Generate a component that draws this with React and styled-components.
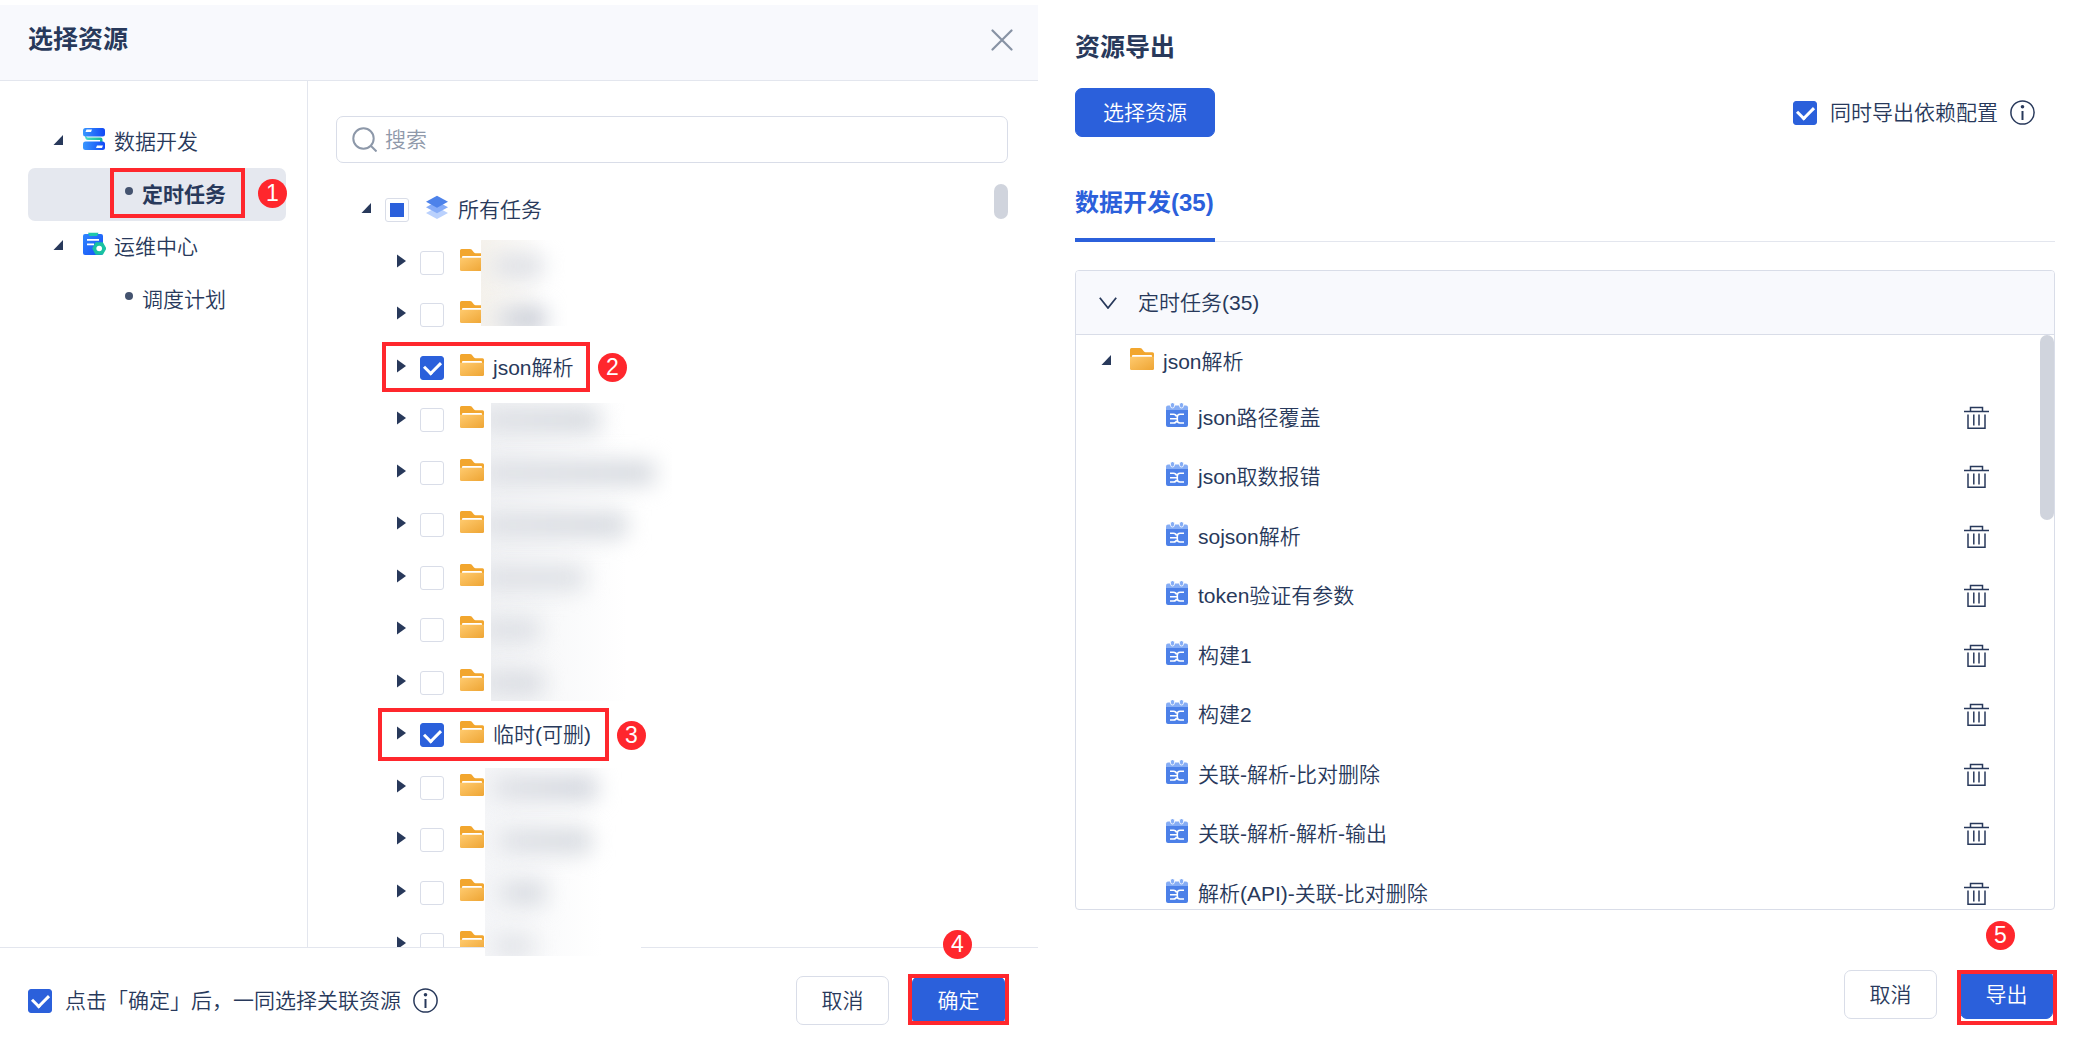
import { useEffect, useRef } from 'react';
import styled, { createGlobalStyle, ThemeProvider } from 'styled-components';

const theme = {
  colors: {
    primary: '#2b60db',
    text: '#28395b',
    textSecondary: '#8f99aa',
    header: '#f8f9fd',
    border: '#d9dde8',
    divider: '#e3e6ee',
    active: '#e5e8ef',
    thumb: '#d0d4dd',
    mark: '#ff272d',
  },
};

const GlobalStyle = createGlobalStyle`
  * {
    box-sizing: border-box;
  }

  body {
    margin: 0;
    background: #fff;
  }

  body, button, input {
    font-family: "Liberation Sans", "Noto Sans CJK SC", sans-serif;
    font-size: 21px;
    font-weight: 350;
    line-height: 32px;
    color: ${theme.colors.text};
  }

  ul {
    list-style: none;
    margin: 0;
    padding: 0;
  }
`;

const Page = styled.main`
  display: grid;
  grid-template-columns: minmax(0, 1038fr) minmax(0, 1047fr);
  height: 100vh;
`;

/* ---------- shared parts ---------- */

const IconButton = styled.button`
  display: flex;
  flex: none;
  padding: 0;
  border: 0;
  background: none;
  cursor: pointer;
`;

const Button = styled.button`
  position: relative;
  min-width: 93px;
  height: 49px;
  padding: 0 ${props => (props.$wide ? 27 : 24)}px;
  border: 1px solid ${props => (props.$primary ? props.theme.colors.primary : props.theme.colors.border)};
  border-radius: 7px;
  background: ${props => (props.$primary ? props.theme.colors.primary : '#fff')};
  color: ${props => (props.$primary ? '#fff' : props.theme.colors.text)};
  cursor: pointer;
`;

const CheckInput = styled.input`
  appearance: none;
  flex: none;
  display: grid;
  place-items: center;
  width: 24px;
  height: 24px;
  margin: 0;
  border: 1px solid ${props => props.theme.colors.border};
  border-radius: 3px;
  background: #fff;

  &:checked {
    border-color: ${props => props.theme.colors.primary};
    background: ${props => props.theme.colors.primary};
  }

  &:checked::after {
    content: '';
    width: 8px;
    height: 13px;
    margin-bottom: 3px;
    border: solid #fff;
    border-width: 0 3px 3px 0;
    transform: rotate(45deg);
  }

  &:indeterminate::after {
    content: '';
    width: 14px;
    height: 14px;
    background: ${props => props.theme.colors.primary};
  }
`;

const Thumb = styled.div`
  position: absolute;
  top: 0;
  right: 0;
  width: 14px;
  height: ${props => props.$length}px;
  border-radius: 7px;
  background: ${props => props.theme.colors.thumb};
`;

const Frame = styled.span`
  position: absolute;
  top: ${props => props.$top}px;
  left: ${props => props.$left}px;
  width: ${props => props.$width}px;
  height: ${props => props.$height}px;
  border: 4px solid ${props => props.theme.colors.mark};
  pointer-events: none;
`;

const Badge = styled.span`
  position: absolute;
  top: ${props => props.$top}px;
  left: ${props => props.$left}px;
  width: 29px;
  height: 29px;
  border-radius: 50%;
  background: ${props => props.theme.colors.mark};
  color: #fff;
  font-size: 23px;
  font-weight: 400;
  line-height: 29px;
  text-align: center;
  pointer-events: none;
`;

const CheckLabel = styled.label`
  display: flex;
  align-items: center;
  gap: 13px;
`;

const CheckField = styled.div`
  display: flex;
  align-items: center;
  gap: 12px;
`;

const RowIcon = styled.svg`
  flex: none;
  display: block;
  width: 24px;
  height: 24px;
  margin-bottom: 6px;
`;

const CaretButton = styled(IconButton)`
  margin-bottom: 4px;
`;

/* ---------- icons ---------- */

function Caret({ open }) {
  return (
    <CaretButton type="button" aria-label={open ? '收起' : '展开'}>
      <svg width="10" height="14" viewBox="0 0 10 14">
        <path d={open ? 'M10 2v10H.5z' : 'M1 .5l9 6.5-9 6.5z'} fill="#28395b" />
      </svg>
    </CaretButton>
  );
}

function FolderIcon() {
  return (
    <RowIcon viewBox="0 0 24 24">
      <defs>
        <linearGradient id="folder" x1="0" y1="0" x2="1" y2="1">
          <stop offset="0" stopColor="#ffca6e" />
          <stop offset="1" stopColor="#eea534" />
        </linearGradient>
      </defs>
      <path d="M0 2.500Q0 1 1.500 1H10Q11 1 11.600 1.600L14 4.500Q14.600 5.200 15.500 5.200H22.500Q24 5.200 24 6.700V15H0z" fill="#f2a62e" />
      <path d="M2 10V8.800Q2 8 3 8H21Q22 8 22 8.800V11H2z" fill="#fff" />
      <path d="M0 9.700H24V21.500Q24 23 22.500 23H1.500Q0 23 0 21.500z" fill="url(#folder)" />
    </RowIcon>
  );
}

function LayersIcon() {
  return (
    <RowIcon viewBox="0 0 24 24">
      <path d="M1 18l11-6 11 6-11 6z" fill="#bad1fd" />
      <path d="M1 12.300l11-6 11 6-11 6z" fill="#86acf8" />
      <path d="M1 6.800L12 .8l11 6-11 6z" fill="#4d82ea" />
    </RowIcon>
  );
}

function TaskIcon() {
  return (
    <RowIcon viewBox="0 0 24 24">
      <path d="M1 4.500Q1 2.500 3 2.500H21Q23 2.500 23 4.500V9H1z" fill="#86adf5" />
      <path d="M1 7H23V22Q23 24 21 24H3Q1 24 1 22z" fill="#4c80e8" />
      <rect x="5.500" y="-.5" width="4" height="5.500" rx="2" fill="#86adf5" stroke="#fff" strokeWidth="0.800" />
      <rect x="14.500" y="-.5" width="4" height="5.500" rx="2" fill="#86adf5" stroke="#fff" strokeWidth="0.800" />
      <path d="M5 11.300H8.500Q11 11.300 11.500 13.500M5 15.700H11.500M5 20H8.500Q11 20 11.500 18M19 11.300H15Q12.300 11.300 12.300 14V17.300Q12.300 20 15 20H19" fill="none" stroke="#fff" strokeWidth="1.600" />
    </RowIcon>
  );
}

function DataIcon() {
  return (
    <RowIcon viewBox="0 0 24 24">
      <defs>
        <linearGradient id="bar" x1="0" x2="1" y1="0" y2="0">
          <stop offset="0" stopColor="#3997ff" />
          <stop offset="1" stopColor="#1148f5" />
        </linearGradient>
        <linearGradient id="link" x1="0" x2="1" y1="0" y2="0">
          <stop offset="0" stopColor="#4ddcc8" />
          <stop offset="1" stopColor="#13b795" />
        </linearGradient>
      </defs>
      <path d="M3 8.500l2.500 2H18.500q2 0 2 2V15.500h-2.500V13H6q-3 0-3-4.500z" fill="url(#link)" />
      <rect x="1" y="1" width="22" height="8.500" rx="2.500" fill="url(#bar)" />
      <rect x="1" y="14.500" width="22" height="8.500" rx="2.500" fill="url(#bar)" />
      <path d="M4.500 2.500H10L9 5H3.500zM15 18.500h6L20 21h-6z" fill="#fff" />
    </RowIcon>
  );
}

function CenterIcon() {
  return (
    <RowIcon viewBox="0 0 24 24">
      <defs>
        <linearGradient id="sheet" x1="0" x2="1" y1="0" y2="1">
          <stop offset="0" stopColor="#2f86ff" />
          <stop offset="1" stopColor="#164ef5" />
        </linearGradient>
      </defs>
      <rect x="1" y="2" width="20" height="21" rx="2" fill="url(#sheet)" />
      <path d="M6 .8H16.500L15 4H7.500z" fill="#1fc7ac" />
      <path d="M5 7.800H17M5 12.300H12" stroke="#fff" strokeWidth="1.800" />
      <path d="M14 11h6.500l3 5.500-3 5.500H14l-3-5.500z" fill="#19c2a2" stroke="#19c2a2" strokeWidth="1.500" strokeLinejoin="round" />
      <circle cx="17.200" cy="16.500" r="2.800" fill="#fff" />
    </RowIcon>
  );
}

function TrashIcon() {
  return (
    <svg width="25" height="24" viewBox="0 0 25 24" fill="none" stroke="#28395b" strokeWidth="1.500">
      <path d="M0 5.500H25M6.500 5V1.500H18.500V5M4 8.500V22.300H21V8.500M9.800 8.500V19.500M15 8.500V19.500" />
    </svg>
  );
}

function InfoIcon() {
  return (
    <svg width="25" height="25" viewBox="0 0 25 25">
      <circle cx="12.500" cy="12.500" r="11.600" fill="none" stroke="#28395b" strokeWidth="1.500" />
      <circle cx="12.500" cy="6.800" r="1.800" fill="#28395b" />
      <path d="M12.500 11V20" stroke="#28395b" strokeWidth="2" />
    </svg>
  );
}

/* ---------- resource dialog ---------- */

const Dialog = styled.section`
  display: flex;
  flex-direction: column;
  min-height: 0;
  padding-top: 5px;
`;

const DialogHeader = styled.header`
  display: flex;
  flex: none;
  justify-content: space-between;
  height: 76px;
  padding: 18px 25px 0 28px;
  border-bottom: 1px solid ${props => props.theme.colors.divider};
  background: ${props => props.theme.colors.header};
`;

const Title = styled.h2`
  margin: 0;
  font-size: 25px;
  font-weight: 700;
  line-height: 32px;
`;

const DialogBody = styled.div`
  position: relative;
  display: flex;
  flex: 1;
  min-height: 0;
`;

const Sidebar = styled.nav`
  flex: none;
  width: 308px;
  padding: 35px 21px 0 28px;
  border-right: 1px solid ${props => props.theme.colors.divider};
`;

const NavList = styled.ul`
  display: grid;
  grid-auto-rows: 52px 53px;
`;

const NavRow = styled.li`
  position: relative;
  display: flex;
  align-items: center;
  padding-left: ${props => (props.$child ? 97 : 25)}px;
  border-radius: 7px;
  background: ${props => (props.$active ? props.theme.colors.active : 'none')};

  ${CaretButton} {
    margin-right: 19px;
  }

  ${RowIcon} {
    margin-right: 8px;
  }
`;

const NavLink = styled.a`
  display: flex;
  align-items: center;
  gap: 9px;
  color: inherit;
  font-weight: ${props => (props.$active ? 700 : 350)};
  text-decoration: none;
`;

const Bullet = styled.span`
  width: 8px;
  height: 8px;
  margin-bottom: 7px;
  border-radius: 50%;
  background: #44536f;
`;

const Picker = styled.div`
  display: flex;
  flex: 1;
  flex-direction: column;
  gap: 21px;
  min-width: 0;
  padding: 35px 30px 0 28px;
`;

const SearchBox = styled.label`
  display: flex;
  flex: none;
  align-items: center;
  gap: 8px;
  height: 47px;
  padding: 0 15px;
  border: 1px solid ${props => props.theme.colors.border};
  border-radius: 7px;
`;

const SearchInput = styled.input`
  flex: 1;
  min-width: 0;
  padding: 0;
  border: 0;
  outline: 0;
  background: none;

  &::placeholder {
    color: ${props => props.theme.colors.textSecondary};
    opacity: 1;
  }
`;

const TreeArea = styled.div`
  position: relative;
  flex: 1;
  min-height: 0;
  overflow: hidden;
`;

const TreeList = styled.ul`
  display: grid;
  grid-auto-rows: 52px 53px;
`;

const TreeRow = styled.li`
  position: relative;
  display: flex;
  align-items: center;
  padding-left: ${props => (props.$root ? 25 : 60)}px;

  ${CaretButton} {
    margin-right: 14px;
  }
`;

const TreeLabel = styled.label`
  display: flex;
  align-items: center;
  gap: 9px;
  margin-left: 16px;
`;

const Mosaic = styled.div`
  position: absolute;
  z-index: 1;
  top: ${props => props.$top}px;
  left: ${props => props.$left}px;
  display: grid;
  grid-template-rows: ${props => props.$first}px;
  grid-auto-rows: 53px 52px;
  align-items: end;
  width: ${props => props.$width}px;
  height: ${props => props.$height}px;
  overflow: hidden;
  background: linear-gradient(to right, ${props => props.$tint}, #fff 75%), #fff;
`;

const Smudge = styled.span`
  height: 24px;
  margin-left: ${props => props.$indent || -12}px;
  width: ${props => props.$width}px;
  border-radius: 6px;
  background: linear-gradient(to right, #dfe1e6, ${props => props.$tone || '#d3d7dd'});
  filter: blur(11px);
`;

const Footer = styled.footer`
  position: relative;
  display: flex;
  flex: none;
  align-items: center;
  justify-content: space-between;
  height: 90px;
  padding: 16px 33px 0 28px;
  border-top: 1px solid ${props => props.theme.colors.divider};
`;

const Actions = styled.div`
  display: flex;
  gap: 23px;
`;

/* ---------- export pane ---------- */

const Pane = styled.section`
  display: flex;
  flex-direction: column;
  min-height: 0;
  padding: 31px 30px 18px 37px;
`;

const Toolbar = styled.div`
  display: flex;
  flex: none;
  align-items: center;
  justify-content: space-between;
  margin: 25px 0 50px;
  padding-right: 20px;
`;

const Tabs = styled.div`
  display: flex;
  flex: none;
  border-bottom: 1px solid ${props => props.theme.colors.divider};
`;

const Tab = styled.button`
  margin-bottom: -1px;
  padding: 0 1px 19px 0;
  border: 0;
  border-bottom: 4px solid ${props => props.theme.colors.primary};
  background: none;
  color: ${props => props.theme.colors.primary};
  font-size: 24px;
  font-weight: 700;
`;

const Panel = styled.div`
  display: flex;
  flex: 1;
  flex-direction: column;
  min-height: 0;
  margin: 28px 0 60px;
  border: 1px solid ${props => props.theme.colors.border};
  border-radius: 4px;
  overflow: hidden;
`;

const PanelHeader = styled.button`
  display: flex;
  flex: none;
  align-items: center;
  gap: 21px;
  height: 64px;
  padding: 0 23px;
  border: 0;
  border-bottom: 1px solid ${props => props.theme.colors.border};
  background: ${props => props.theme.colors.header};
`;

const PanelBody = styled.div`
  position: relative;
  flex: 1;
  min-height: 0;
  overflow: hidden;
`;

const FolderRow = styled.div`
  display: flex;
  align-items: center;
  gap: 9px;
  height: 53px;
  padding-left: 25px;

  ${CaretButton} {
    margin-right: 10px;
  }
`;

const TaskList = styled.ul`
  display: grid;
  grid-auto-rows: 59px 60px;
`;

const TaskRow = styled.li`
  display: flex;
  align-items: center;
  gap: 9px;
  padding: 0 65px 0 89px;
`;

const TaskName = styled.span`
  flex: 1;
`;

const PaneActions = styled(Actions)`
  flex: none;
  justify-content: flex-end;
  padding-right: 2px;
`;

const folders = [
  {},
  {},
  { name: 'json解析', checked: true, badge: 2, frame: { $top: 1, $left: 46, $width: 208, $height: 50 } },
  {},
  {},
  {},
  {},
  {},
  {},
  { name: '临时(可删)', checked: true, badge: 3, frame: { $top: -1, $left: 42, $width: 231, $height: 53 } },
  {},
  {},
  {},
  {},
];

const tasks = [
  'json路径覆盖',
  'json取数报错',
  'sojson解析',
  'token验证有参数',
  '构建1',
  '构建2',
  '关联-解析-比对删除',
  '关联-解析-解析-输出',
  '解析(API)-关联-比对删除',
];

function ResourceTree() {
  const allRef = useRef(null);

  useEffect(() => {
    allRef.current.indeterminate = true;
  }, []);

  return (
    <TreeArea>
      <TreeList>
        <TreeRow $root>
          <Caret open />
          <CheckInput type="checkbox" id="all" ref={allRef} />
          <TreeLabel htmlFor="all">
            <LayersIcon />
            所有任务
          </TreeLabel>
        </TreeRow>
        {folders.map((folder, index) => (
          <TreeRow key={index}>
            <Caret />
            <CheckInput
              type="checkbox"
              id={`folder-${index}`}
              aria-label={folder.name || '文件夹'}
              defaultChecked={folder.checked}
            />
            <TreeLabel htmlFor={`folder-${index}`}>
              <FolderIcon />
              {folder.name}
            </TreeLabel>
            {folder.frame && <Frame {...folder.frame} />}
            {folder.badge && (
              <Badge $top={12} $left={folder.frame.$left + folder.frame.$width + 8}>{folder.badge}</Badge>
            )}
          </TreeRow>
        ))}
      </TreeList>
      <Thumb $length={35} />
    </TreeArea>
  );
}

function ResourceDialog() {
  return (
    <Dialog>
      <DialogHeader>
        <Title>选择资源</Title>
        <IconButton type="button" aria-label="关闭">
          <svg width="22" height="34" viewBox="0 0 22 34">
            <path d="M1.500 7.500l19 19M20.500 7.500l-19 19" stroke="#8792a4" strokeWidth="2.200" strokeLinecap="round" />
          </svg>
        </IconButton>
      </DialogHeader>

      <DialogBody>
        <Sidebar>
          <NavList>
            <NavRow>
              <Caret open />
              <DataIcon />
              <NavLink href="#data">数据开发</NavLink>
            </NavRow>
            <NavRow $child $active>
              <NavLink href="#timing" $active>
                <Bullet />
                定时任务
              </NavLink>
              <Frame $top={0} $left={82} $width={135} $height={50} />
              <Badge $top={11} $left={230}>1</Badge>
            </NavRow>
            <NavRow>
              <Caret open />
              <CenterIcon />
              <NavLink href="#center">运维中心</NavLink>
            </NavRow>
            <NavRow $child>
              <NavLink href="#plan">
                <Bullet />
                调度计划
              </NavLink>
            </NavRow>
          </NavList>
        </Sidebar>

        <Picker>
          <SearchBox>
            <svg width="25" height="25" viewBox="0 0 25 25" fill="none" stroke="#8d98a9" strokeWidth="2">
              <circle cx="11.500" cy="11.500" r="10.200" />
              <path d="M18.500 18.500l6 6" />
            </svg>
            <SearchInput type="text" placeholder="搜索" aria-label="搜索" />
          </SearchBox>
          <ResourceTree />
        </Picker>

        <Mosaic $top={159} $left={481} $width={86} $height={86} $first={38} $tint="#f5f2ec">
          <Smudge $indent={12} $width={50} $tone="#dcdee4" />
          <Smudge $indent={14} $width={50} $tone="#bcc1cd" />
        </Mosaic>
        <Mosaic $top={322} $left={491} $width={181} $height={298} $first={29} $tint="#f3f4f6">
          <Smudge $width={120} />
          <Smudge $width={176} />
          <Smudge $width={148} />
          <Smudge $width={106} $tone="#dcdfe4" />
          <Smudge $width={60} $tone="#dcdfe4" />
          <Smudge $width={64} $tone="#d6d9df" />
        </Mosaic>
        <Mosaic $top={687} $left={485} $width={156} $height={188} $first={32} $tint="#f5f6f8">
          <Smudge $indent={8} $width={104} $tone="#ced2da" />
          <Smudge $indent={14} $width={92} $tone="#d3d7dd" />
          <Smudge $indent={14} $width={46} $tone="#d3d7dd" />
          <Smudge $indent={10} $width={40} $tone="#e4e6ea" />
        </Mosaic>
      </DialogBody>

      <Footer>
        <CheckField>
          <CheckLabel>
            <CheckInput type="checkbox" defaultChecked />
            点击「确定」后，一同选择关联资源
          </CheckLabel>
          <InfoIcon />
        </CheckField>
        <Actions>
          <Button type="button">取消</Button>
          <Button type="button" $primary>
            确定
            <Frame $top={-3} $left={-5} $width={101} $height={51} />
            <Badge $top={-47} $left={30}>4</Badge>
          </Button>
        </Actions>
      </Footer>
    </Dialog>
  );
}

function ExportPane() {
  return (
    <Pane>
      <Title>资源导出</Title>
      <Toolbar>
        <Button type="button" $primary $wide>选择资源</Button>
        <CheckField>
          <CheckLabel>
            <CheckInput type="checkbox" defaultChecked />
            同时导出依赖配置
          </CheckLabel>
          <InfoIcon />
        </CheckField>
      </Toolbar>

      <Tabs role="tablist">
        <Tab type="button" role="tab" aria-selected="true">数据开发(35)</Tab>
      </Tabs>

      <Panel>
        <PanelHeader type="button">
          <svg width="18" height="12" viewBox="0 0 18 12">
            <path d="M.8.8L9 11 17.200.8" fill="none" stroke="#28395b" strokeWidth="1.800" />
          </svg>
          定时任务(35)
        </PanelHeader>
        <PanelBody>
          <FolderRow>
            <Caret open />
            <FolderIcon />
            json解析
          </FolderRow>
          <TaskList>
            {tasks.map(task => (
              <TaskRow key={task}>
                <TaskIcon />
                <TaskName>{task}</TaskName>
                <IconButton type="button" aria-label={`删除 ${task}`}>
                  <TrashIcon />
                </IconButton>
              </TaskRow>
            ))}
          </TaskList>
          <Thumb $length={185} />
        </PanelBody>
      </Panel>

      <PaneActions>
        <Button type="button">取消</Button>
        <Button type="button" $primary>
          导出
          <Frame $top={-1} $left={-4} $width={100} $height={55} />
          <Badge $top={-50} $left={25}>5</Badge>
        </Button>
      </PaneActions>
    </Pane>
  );
}

function App() {
  return (
    <ThemeProvider theme={theme}>
      <GlobalStyle />
      <Page>
        <ResourceDialog />
        <ExportPane />
      </Page>
    </ThemeProvider>
  );
}

export default App;
